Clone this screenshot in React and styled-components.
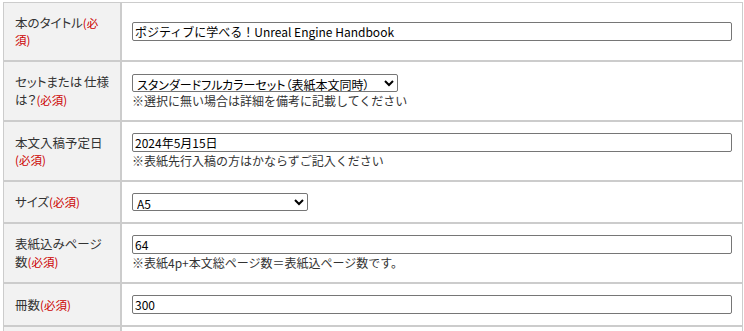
import styled, { createGlobalStyle } from 'styled-components';

const GlobalStyle = createGlobalStyle`
	body{
		margin: 2px 0 0 3px;
		background: #fff;
		font-family: "Noto Sans CJK JP", "Noto Sans", sans-serif;
		color: #333;
	}
`
const FormTable = styled.table`
	width: 740px;
	border-collapse: separate;
	border-spacing: 0;
	table-layout: fixed;
`
const LabelCell = styled.th`
	box-sizing: border-box;
	width: 118px;
	padding: 11px 10px 11px 11px;
	background-color: #f2f2f2;
	border: 1px solid #ccc;
	text-align: left;
	font-weight: 400;
	font-size: 11px;
	line-height: 17px;
	word-spacing: -1px;
	vertical-align: middle;
`
const LabelName = styled.span`
	font-size: 12.5px;
	font-feature-settings: "palt";
	color: #333;
`
const Required = styled.span`
	font-size: 11.5px;
	color: #cc0000;
`
const FieldCell = styled.td`
	padding: 11px 10px;
	border: 1px solid #ccc;
	vertical-align: middle;
	background: #fff;
`
const TextInput = styled.input`
	display: block;
	box-sizing: border-box;
	width: 100%;
	height: 19px;
	margin: 0;
	padding: 0 2px;
	border: 1px solid #767676;
	border-radius: 2px;
	font-family: "Noto Sans CJK JP", sans-serif;
	font-size: 12px;
	color: #000;
	background: #fff;
`
const Select = styled.select`
	display: block;
	box-sizing: border-box;
	width: ${p => p.$width || 'auto'};
	height: 18px;
	margin: 0;
	padding: 0 11px 0 0;
	border: 1px solid #767676;
	border-radius: 2px;
	font-family: "Noto Sans CJK JP", sans-serif;
	font-size: 12px;
	font-feature-settings: "palt";
	color: #000;
	background: #fff;
`
const Note = styled.p`
	margin: 0;
	font-size: 12px;
	line-height: 17px;
	color: #333;
`
const TextArea = styled.textarea`
	display: block;
	box-sizing: border-box;
	width: 100%;
	height: 60px;
	border: 1px solid #767676;
`

const Label = ({children}) => (
	<LabelCell>
		<LabelName>{children}</LabelName><Required>(必須)</Required>
	</LabelCell>
)

const App = () => {
	return (
		<>
			<GlobalStyle />
			<FormTable>
				<tbody>
					<tr>
						<Label>本のタイトル</Label>
						<FieldCell>
							<TextInput defaultValue="ポジティブに学べる！Unreal Engine Handbook" />
						</FieldCell>
					</tr>
					<tr>
						<Label>セットまたは 仕様は？</Label>
						<FieldCell>
							<Select defaultValue="full">
								<option value="full">スタンダードフルカラーセット（表紙本文同時）</option>
							</Select>
							<Note>※選択に無い場合は詳細を備考に記載してください</Note>
						</FieldCell>
					</tr>
					<tr>
						<Label>本文入稿予定日</Label>
						<FieldCell>
							<TextInput defaultValue="2024年5月15日" />
							<Note>※表紙先行入稿の方はかならずご記入ください</Note>
						</FieldCell>
					</tr>
					<tr>
						<Label>サイズ</Label>
						<FieldCell>
							<Select $width="176px" defaultValue="A5">
								<option value="A5">A5</option>
								<option value="B5">B5</option>
							</Select>
						</FieldCell>
					</tr>
					<tr>
						<Label>表紙込みページ数</Label>
						<FieldCell>
							<TextInput defaultValue="64" />
							<Note>※表紙4p+本文総ページ数＝表紙込ページ数です。</Note>
						</FieldCell>
					</tr>
					<tr>
						<Label>冊数</Label>
						<FieldCell>
							<TextInput defaultValue="300" />
						</FieldCell>
					</tr>
					<tr>
						<LabelCell><LabelName>備考</LabelName></LabelCell>
						<FieldCell>
							<TextArea />
						</FieldCell>
					</tr>
				</tbody>
			</FormTable>
		</>
	)
}

export default App
